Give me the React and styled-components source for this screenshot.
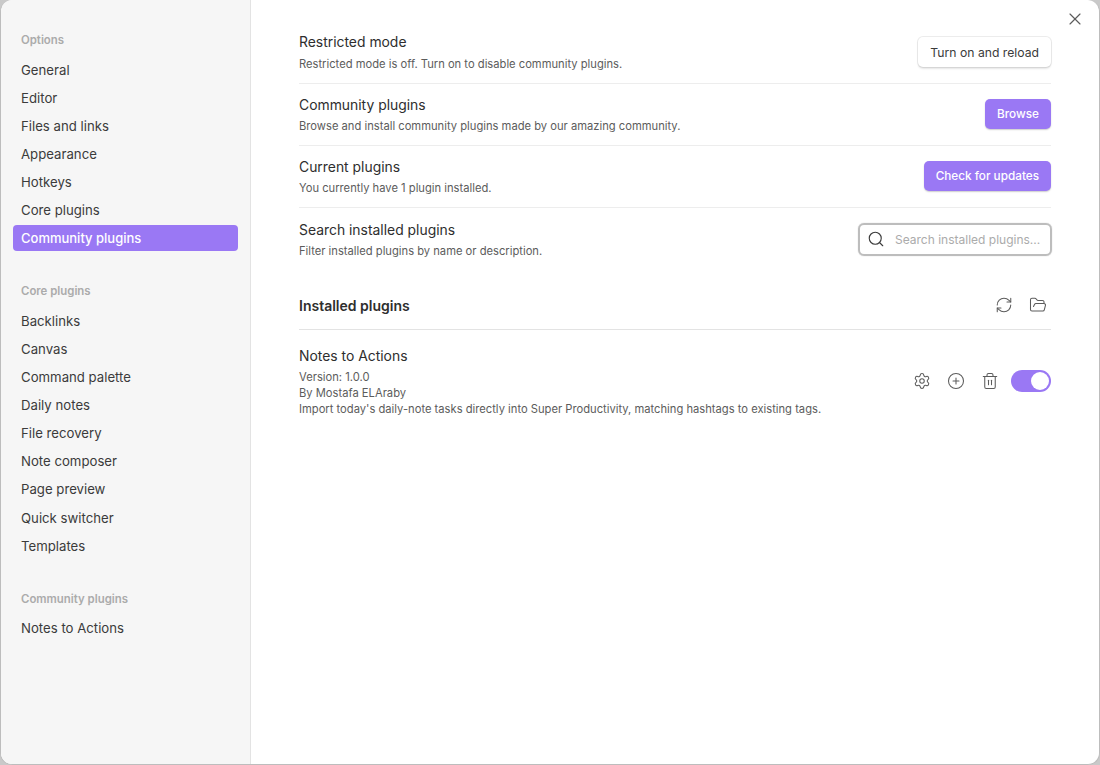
import React from 'react';
import styled, { createGlobalStyle } from 'styled-components';
import { X, Search, RefreshCw, FolderOpen, Settings, CirclePlus, Trash2 } from 'lucide-react';

const GlobalStyle = createGlobalStyle`
  html, body {
    margin: 0;
    padding: 0;
    background: #c9c9c9;
  }
  body {
    font-family: Inter, "Noto Sans", sans-serif;
  }
`;

const Modal = styled.div`
  position: relative;
  box-sizing: border-box;
  width: 1100px;
  height: 765px;
  display: flex;
  overflow: hidden;
  background: #ffffff;
  border: 1px solid #bdbdbd;
  border-top: none;
  border-radius: 12px;
`;

const Sidebar = styled.nav`
  box-sizing: border-box;
  width: 250px;
  flex-shrink: 0;
  padding: 33px 12px 0;
  background: #f6f6f6;
  border-right: 1px solid #e3e3e3;
`;

const GroupTitle = styled.div`
  height: 14px;
  line-height: 14px;
  padding-left: 8px;
  margin-bottom: 9.5px;
  font-size: 11.4px;
  font-weight: 600;
  color: #ababab;
`;

const Group = styled.div`
  display: flex;
  flex-direction: column;
  gap: 2px;
  margin-bottom: 32.75px;
`;

const NavItem = styled.div`
  height: 26.14px;
  line-height: 26px;
  padding-left: 8px;
  border-radius: 4px;
  font-size: ${props => (props.$active ? 13 : 13.2)}px;
  color: ${props => (props.$active ? '#ffffff' : '#3b3b3b')};
  font-weight: ${props => (props.$active ? 500 : 400)};
  background: ${props => (props.$active ? '#9a78f4' : 'transparent')};
`;

const Content = styled.main`
  box-sizing: border-box;
  flex: 1;
  padding: 22px 48px 0;
`;

const CloseButton = styled.div`
  position: absolute;
  top: 9px;
  right: 14px;
  display: flex;
  color: #5c5c5c;
`;

const Row = styled.div`
  box-sizing: border-box;
  height: 62px;
  display: flex;
  align-items: center;
  justify-content: space-between;
  border-bottom: ${props => (props.$last ? 'none' : '1px solid #ededed')};
`;

const Info = styled.div`
  display: flex;
  flex-direction: column;
  gap: ${props => (props.$first ? 1 : 0)}px;
  margin-bottom: ${props => (props.$first ? 1 : 0)}px;
`;

const Name = styled.div`
  font-size: 13.9px;
  line-height: 20px;
  color: #2e2e2e;
  margin-bottom: 3px;
`;

const Description = styled.div`
  font-size: 11.2px;
  line-height: 16px;
  color: #5c5c5c;
`;

const Button = styled.button`
  height: 30px;
  margin-bottom: 1px;
  padding: 0 12px;
  border: none;
  border-radius: 5px;
  font-family: inherit;
  font-size: ${props => (props.$primary ? 11.75 : 12.2)}px;
  font-weight: ${props => (props.$primary ? 500 : 400)};
  color: ${props => (props.$primary ? '#ffffff' : '#3b3b3b')};
  background: ${props => (props.$primary ? '#9a78f4' : '#ffffff')};
  box-shadow: ${props =>
    props.$primary
      ? '0 1px 1.5px rgba(0, 0, 0, 0.2)'
      : '0 0 0 1px rgba(0, 0, 0, 0.07), 0 1.5px 2px rgba(0, 0, 0, 0.1)'};
`;

const SearchBox = styled.div`
  box-sizing: border-box;
  width: 194px;
  height: 33px;
  margin-right: -1px;
  padding-left: 7px;
  display: flex;
  align-items: center;
  gap: 10px;
  border: 2px solid #bdbdbd;
  border-radius: 6px;
  box-shadow: 0 0 1px rgba(0, 0, 0, 0.3);
  color: #3b3b3b;
`;

const SearchText = styled.span`
  font-size: 12px;
  color: #ababab;
  white-space: nowrap;
`;

const Heading = styled.div`
  box-sizing: border-box;
  height: 60px;
  padding-top: 11px;
  display: flex;
  align-items: center;
  justify-content: space-between;
  border-bottom: 1px solid #e3e3e3;
`;

const HeadingText = styled.h3`
  margin: 0;
  font-size: 14px;
  font-weight: 600;
  color: #2e2e2e;
`;

const IconRow = styled.div`
  display: flex;
  align-items: center;
  gap: 16px;
  padding-right: ${props => props.$inset || 0}px;
  margin-bottom: ${props => props.$lift || 0}px;
  color: #5c5c5c;
`;

const PluginRow = styled.div`
  display: flex;
  align-items: center;
  justify-content: space-between;
  padding-top: 16px;
`;

const Toggle = styled.div`
  position: relative;
  width: 40px;
  height: 22px;
  margin-left: -4px;
  border-radius: 11px;
  background: #9a78f4;

  &::after {
    content: '';
    position: absolute;
    top: 2px;
    right: 2px;
    width: 18px;
    height: 18px;
    border-radius: 50%;
    background: #ffffff;
  }
`;

const groups = [
  {
    title: 'Options',
    items: ['General', 'Editor', 'Files and links', 'Appearance', 'Hotkeys', 'Core plugins', 'Community plugins'],
  },
  {
    title: 'Core plugins',
    items: ['Backlinks', 'Canvas', 'Command palette', 'Daily notes', 'File recovery', 'Note composer', 'Page preview', 'Quick switcher', 'Templates'],
  },
  {
    title: 'Community plugins',
    items: ['Notes to Actions'],
  },
];

const App = () => (
  <>
    <GlobalStyle />
    <Modal>
      <Sidebar>
        {groups.map(group => (
          <div key={group.title}>
            <GroupTitle>{group.title}</GroupTitle>
            <Group>
              {group.items.map(item => (
                <NavItem key={item} $active={group.title === 'Options' && item === 'Community plugins'}>
                  {item}
                </NavItem>
              ))}
            </Group>
          </div>
        ))}
      </Sidebar>
      <Content>
        <CloseButton>
          <X size={20} strokeWidth={1.4} />
        </CloseButton>
        <Row>
          <Info $first>
            <Name>Restricted mode</Name>
            <Description>Restricted mode is off. Turn on to disable community plugins.</Description>
          </Info>
          <Button>Turn on and reload</Button>
        </Row>
        <Row>
          <Info>
            <Name>Community plugins</Name>
            <Description>Browse and install community plugins made by our amazing community.</Description>
          </Info>
          <Button $primary>Browse</Button>
        </Row>
        <Row>
          <Info>
            <Name>Current plugins</Name>
            <Description>You currently have 1 plugin installed.</Description>
          </Info>
          <Button $primary>Check for updates</Button>
        </Row>
        <Row $last>
          <Info>
            <Name>Search installed plugins</Name>
            <Description>Filter installed plugins by name or description.</Description>
          </Info>
          <SearchBox>
            <Search size={18} strokeWidth={1.5} />
            <SearchText>Search installed plugins...</SearchText>
          </SearchBox>
        </Row>
        <Heading>
          <HeadingText>Installed plugins</HeadingText>
          <IconRow $inset={4}>
            <RefreshCw size={18} strokeWidth={1.4} />
            <FolderOpen size={18} strokeWidth={1.4} />
          </IconRow>
        </Heading>
        <PluginRow>
          <Info>
            <Name>Notes to Actions</Name>
            <Description>Version: 1.0.0</Description>
            <Description>By Mostafa ELAraby</Description>
            <Description>Import today's daily-note tasks directly into Super Productivity, matching hashtags to existing tags.</Description>
          </Info>
          <IconRow $lift={2}>
            <Settings size={18} strokeWidth={1.4} />
            <CirclePlus size={18} strokeWidth={1.4} />
            <Trash2 size={18} strokeWidth={1.4} />
            <Toggle />
          </IconRow>
        </PluginRow>
      </Content>
    </Modal>
  </>
);

export default App;
